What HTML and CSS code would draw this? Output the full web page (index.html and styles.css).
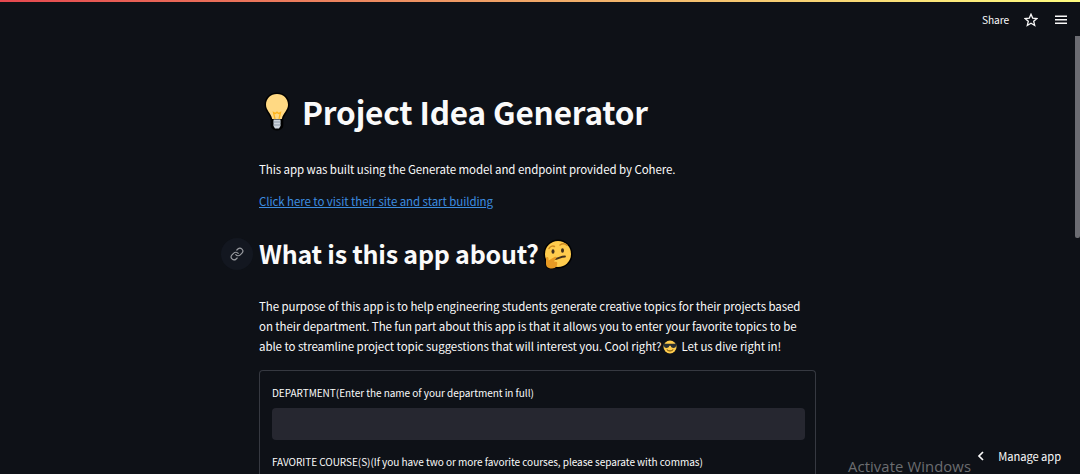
FILE: index.html
```html
<!DOCTYPE html>
<html lang="en">
<head>
    <meta charset="UTF-8">
    <meta name="viewport" content="width=device-width, initial-scale=1.0">
    <title>Project Idea Generator</title>
    <link rel="stylesheet" href="styles.css">
</head>
<body>
    <div class="decoration"></div>
    <header class="toolbar">
        <span class="share">Share</span>
        <svg class="star" viewBox="0 0 14 14"><path d="M7 1.2l1.7 3.9 4.2.4-3.2 2.8 1 4.2L7 10.3l-3.7 2.2 1-4.2L1.1 5.5l4.2-.4z"/></svg>
        <svg class="menu" viewBox="0 0 12 10"><path d="M0 1.2h12M0 4.7h12M0 8.2h12"/></svg>
    </header>

    <main class="container">
        <h1>
            <svg class="bulb" viewBox="0 0 28 40">
                <path class="outline" d="M14 2C7.500 2 3 6.700 3 12.800c0 5.600 4.800 8.200 6.200 14.200v7c0 1.500 2.400 3 4.800 3s4.800-1.500 4.800-3v-7c1.400-6 6.200-8.600 6.200-14.200C25 6.700 20.500 2 14 2z"/>
                <path fill="#ffd983" d="M14 2C7.500 2 3 6.700 3 12.800c0 5.600 4.800 8.200 6.200 14.200h9.600c1.400-6 6.200-8.600 6.200-14.200C25 6.700 20.500 2 14 2z"/>
                <path fill="none" stroke="#ffb51d" stroke-width="1.300" d="M12 27l-1.500-6.500 2 1 1.500-1.300 1.500 1.300 2-1L16 27"/>
                <path fill="#ccd3da" d="M10.500 27.500h7V34L16 36.500h-4L10.500 34z"/>
                <path stroke="#8d99a5" d="M10.500 30h7M10.500 33h7"/>
            </svg>
            <span>Project Idea Generator</span>
        </h1>
        <p class="intro">This app was built using the Generate model and endpoint provided by Cohere.</p>
        <p class="link"><a href="#">Click here to visit their site and start building</a></p>

        <h2>
            <span class="anchor">
                <svg viewBox="0 0 24 24"><path d="M10 13a5 5 0 0 0 7.540.540l3-3a5 5 0 0 0-7.070-7.070l-1.720 1.710"/><path d="M14 11a5 5 0 0 0-7.540-.540l-3 3a5 5 0 0 0 7.070 7.070l1.710-1.710"/></svg>
            </span>
            <span class="title">What is this app about?</span>
            <svg class="thinking" viewBox="0 0 32 32">
                <circle class="outline" cx="16" cy="15" r="13"/>
                <path class="outline" d="M5 17v9c0 3 7 4 9 0l3-4z"/>
                <circle fill="#ffcc4d" cx="16" cy="15" r="13"/>
                <path fill="none" stroke="#cf8b20" stroke-width="1.500" stroke-linecap="round" d="M7 9.500c1-2 3.500-3 5.500-2M18 6c2-1.500 5-1.500 7 .3"/>
                <ellipse fill="#42301c" cx="11" cy="12.500" rx="1.500" ry="2.200"/>
                <ellipse fill="#42301c" cx="20.500" cy="11.500" rx="1.500" ry="2.200"/>
                <path fill="none" stroke="#42301c" stroke-width="1.800" stroke-linecap="round" d="M12.500 20c3.500 0 6-2.500 10.500-2.500"/>
                <path fill="#e79a24" d="M4 19.500c0-2 2.500-2 2.500 0v2l6-3.500c2-.8 2.700 1 1.200 2L12 22.500l3 .5c1 3-1 6.500-5 6.500-5 0-6-2.500-6-5z"/>
            </svg>
        </h2>
        <p class="about">
            <span>The purpose of this app is to help engineering students generate creative topics for their projects based</span><br>
            <span>on their department. The fun part about this app is that it allows you to enter your favorite topics to be</span><br>
            <span>able to streamline project topic suggestions that will interest you. Cool right?</span>
            <svg class="cool" viewBox="0 0 14 14">
                <circle fill="#ffcc4d" cx="7" cy="7" r="6.500"/>
                <path fill="#292f33" d="M.3 3.800h13.400v1.400l-.7.500c0 3-4.800 3-5.300 0h-1.400C5.800 8.700 1 8.700 1 5.700l-.7-.5z"/>
                <path fill="none" stroke="#664500" stroke-linecap="round" d="M4 9.800c1.500 1.700 4.500 1.700 6 0"/>
            </svg>
            <span>Let us dive right in!</span>
        </p>

        <form class="form">
            <label for="department">DEPARTMENT(Enter the name of your department in full)</label>
            <input type="text" id="department">
            <label for="courses">FAVORITE COURSE(S)(If you have two or more favorite courses, please separate with commas)</label>
        </form>
    </main>

    <div class="scrollbar"></div>
    <div class="watermark">Activate Windows</div>
    <div class="manage">
        <svg viewBox="0 0 8 10"><path d="M6 1L2 5l4 4"/></svg>
        <span>Manage app</span>
    </div>
</body>
</html>
```
FILE: styles.css
```css
:root {
    --background: #0e1117;
    --text: #fafafa;
    --input: #262730;
    --link: #3d8de0;
}

* {
    box-sizing: border-box;
}

body {
    position: relative;
    display: flex;
    flex-direction: column;
    margin: 0;
    height: 474px;
    overflow: hidden;
    background: var(--background);
    color: var(--text);
    font-family: "Noto Sans CJK SC", "Open Sans", sans-serif;
    font-size: 11.5px;
    letter-spacing: -0.075px;
    line-height: 20px;
    white-space: nowrap;
}

.decoration {
    height: 2px;
    background: linear-gradient(90deg, #e5484f, #f0a868 50%, #fffd80);
}

.toolbar {
    display: flex;
    align-items: center;
    justify-content: flex-end;
    height: 36px;
    padding-right: 13px;
    font-size: 10.2px;
}

.toolbar svg,
.anchor svg,
.manage svg {
    fill: none;
    stroke: currentColor;
}

.star {
    width: 14px;
    height: 14px;
    margin: 0 17px 0 15px;
    stroke-width: 1.3;
}

.menu {
    width: 12px;
    height: 10px;
    stroke-width: 1.5;
}

.container {
    display: flex;
    flex: 1;
    flex-direction: column;
    width: 557px;
    margin: 53px 0 0 259px;
}

h1,
h2,
p {
    margin: 0;
}

h1 {
    display: flex;
    align-items: center;
    height: 40px;
    font-size: 31.5px;
    letter-spacing: -0.15px;
    line-height: 40px;
}

.bulb {
    width: 28px;
    height: 40px;
    margin: 2px 11px 0 4px;
    overflow: visible;
}

.outline {
    fill: #000;
    stroke: #000;
    stroke-width: 3;
    stroke-linejoin: round;
}

.intro {
    margin-top: 28px;
}

.link {
    margin-top: 12px;
}

a {
    color: var(--link);
}

h2 {
    display: flex;
    align-items: center;
    height: 36px;
    margin: 25px 0 0 -38px;
    font-size: 25px;
    letter-spacing: -0.22px;
    line-height: 36px;
}

.title {
    margin-top: -2px;
}

.anchor {
    display: flex;
    align-items: center;
    justify-content: center;
    width: 32px;
    height: 32px;
    margin-right: 6px;
    border-radius: 50%;
    background: #131720;
    color: #9a9ca1;
}

.anchor svg {
    width: 14px;
    height: 14px;
    stroke-width: 2;
    stroke-linecap: round;
}

.thinking {
    width: 32px;
    height: 32px;
    margin: 2px 0 0 3px;
    overflow: visible;
}

.about {
    margin-top: 24px;
}

.cool {
    width: 14px;
    height: 14px;
    margin: 0 2px 0 -1px;
    vertical-align: -3px;
}

.form {
    flex: 1;
    margin-top: 14px;
    padding: 12px 10px 0 12px;
    border: 1px solid #363941;
    border-bottom: none;
    border-radius: 4px 4px 0 0;
}

label {
    display: block;
    height: 20px;
    font-size: 10.05px;
    letter-spacing: -0.055px;
}

input {
    display: block;
    width: 100%;
    height: 32px;
    margin: 5px 0 12px;
    border: none;
    border-radius: 4px;
    background: var(--input);
    color: var(--text);
}

.scrollbar {
    position: absolute;
    top: 36px;
    right: 0;
    width: 5px;
    height: 202px;
    border-radius: 0 0 2px 2px;
    background: #6b6c72;
}

.watermark {
    position: absolute;
    left: 848px;
    bottom: 0;
    color: #6b6d70;
    font-family: "Open Sans", sans-serif;
    font-size: 14.8px;
    letter-spacing: 0.1px;
    line-height: 15px;
}

.manage {
    position: absolute;
    right: 19px;
    top: 446px;
    display: flex;
    align-items: center;
    gap: 13px;
    font-size: 11.2px;
}

.manage svg {
    width: 8px;
    height: 10px;
    stroke-width: 1.7;
}
```
